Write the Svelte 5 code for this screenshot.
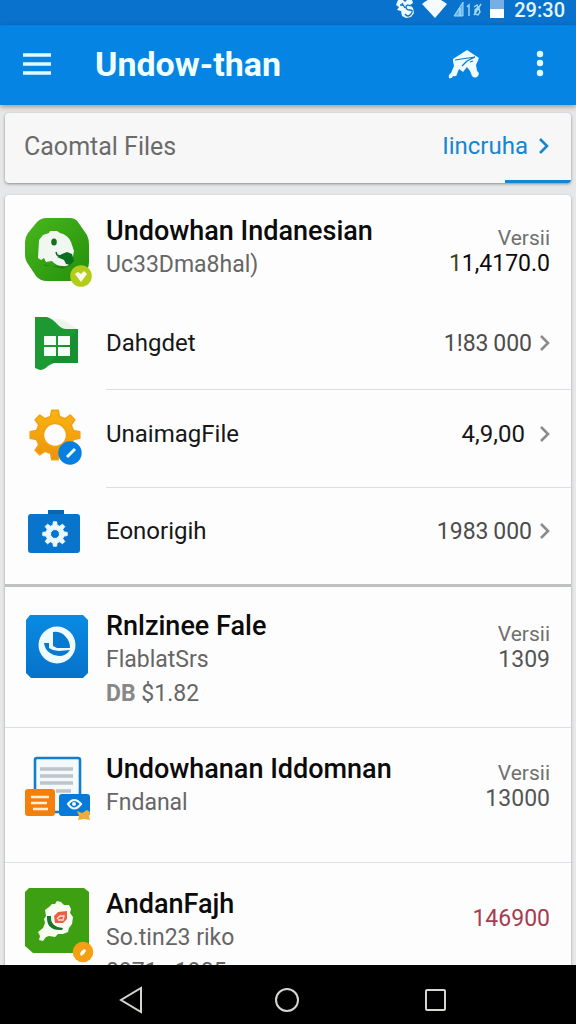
<script>
  function gear(cx, cy, teeth, inner, outer, hole) {
    const step = (Math.PI * 2) / teeth;
    const at = (r, a) => `${(cx + r * Math.sin(a)).toFixed(1)} ${(cy - r * Math.cos(a)).toFixed(1)}`;
    const points = [];
    for (let i = 0; i < teeth; i++) {
      const a = i * step;
      points.push(at(inner, a - step * 0.3), at(outer, a - step * 0.17), at(outer, a + step * 0.17), at(inner, a + step * 0.3));
    }
    return `M${points.join('L')}ZM${cx - hole} ${cy}a${hole} ${hole} 0 1 0 ${hole * 2} 0a${hole} ${hole} 0 1 0 ${-hole * 2} 0Z`;
  }

  const settings = [
    { icon: 'sheet', name: 'Dahgdet', value: '1!83\u2009000', tone: 'soft' },
    { icon: 'gear', name: 'UnaimagFile', value: '4,9,00', tone: 'dark' },
    { icon: 'case', name: 'Eonorigih', value: '1983\u2009000', tone: 'soft' }
  ];
</script>

{#snippet chevron()}
  <svg class="chevron" viewBox="0 0 12 18" aria-hidden="true"><path d="M2 2l7 7-7 7" fill="none" stroke="currentColor" stroke-width="2.6" /></svg>
{/snippet}

<div class="screen">
  <div class="status">
    <svg width="20" height="20" viewBox="0 0 20 20" aria-hidden="true">
      <path d="M2 0h5l2 2 2-2h5l1 3-3 2 3 3 1 5-3 4-5 1-4-2-1-5-4-1 2-3-3-2z" fill="#eefaff" />
      <path d="M15 6q-5-2-5 1t4 3 1 4-6 0M6 3l3 5M4 5l3 0" fill="none" stroke="#0872cd" stroke-width="1.3" />
    </svg>
    <svg width="25" height="18" viewBox="0 0 25 18" aria-hidden="true"><path d="M0 4Q12-7 25 4L13 18Z" fill="#f4fcff" /></svg>
    <svg width="31" height="18" viewBox="0 0 31 18" aria-hidden="true">
      <path d="M1 16L10 2v14z" fill="#62b6ee" stroke="#a5dafa" />
      <path d="M7 16V8M14 7l2-2v11M21 7l3-2 1 2-3 3v4l3 1 2-3-1-3-3 1M21 15l7-11" fill="none" stroke="#a5dafa" stroke-width="1.4" />
    </svg>
    <svg width="14" height="18" viewBox="0 0 14 18" aria-hidden="true"><path d="M0 0h14v9H0z" fill="#75afe4" /><path d="M0 9h14v9H0z" fill="#fff" /></svg>
    <time>29:30</time>
  </div>

  <header>
    <button class="menu" aria-label="Menu">
      <svg width="30" height="24" viewBox="0 0 30 24"><path d="M1 3h28M1 12h28M1 21h28" stroke="#dffbff" stroke-width="3.4" /></svg>
    </button>
    <h1>Undow-than</h1>
    <button aria-label="Home">
      <svg width="30" height="28" viewBox="0 0 30 28">
        <path d="M3 9L17 0l12 8-3 7 1 6q3 2 1 5-3 3-6 0l-2-5-3-4-4 5-4-3-2 5q0 3-4 2-1 3-4 2-1-3 2-5l3-7-1-5z" fill="#effcff" />
        <path d="M5 10l20-3-8 4-5 5M20 12l3-1" fill="none" stroke="#0b78c9" stroke-width="1.2" />
      </svg>
    </button>
    <button class="more" aria-label="More options">
      <svg width="8" height="28" viewBox="0 0 8 28" fill="#dffbff"><circle cx="4" cy="4" r="3.2" /><circle cx="4" cy="13" r="3.2" /><circle cx="4" cy="23" r="3.2" /></svg>
    </button>
  </header>

  <main>
    <nav class="tabs">
      <span>Caomtal Files</span>
      <a href="#more">Iincruha {@render chevron()}</a>
    </nav>

    <div class="card">
      <section class="item first">
        <svg class="art" viewBox="0 0 66 70" aria-hidden="true">
          <defs><linearGradient id="leaf" x1="0" y1="0" x2="1" y2="1"><stop offset="0" stop-color="#48b71d" /><stop offset="1" stop-color="#238f0b" /></linearGradient></defs>
          <path d="M21 0h24q5 0 8 4l9 13q2 4 2 10v17q0 9-7 14-6 5-13 5H22q-7 0-11-5L3 46Q0 42 0 36V24q0-5 3-9L12 4q4-4 9-4z" fill="url(#leaf)" />
          <path d="M18 46l3 2 17 0 8-1-8 4z" fill="#228310" />
          <path d="M14 22l4-5 6-2 1-2h7l3 2q8 2 11 9l3 9-2 10q-3 6-9 5-7 0-11-5l-6 1-2-4-3 2-3-2z" fill="#f0f7f0" />
          <ellipse cx="29" cy="24" rx="2.8" ry="3.6" fill="#16701c" />
          <path d="M37 36l5-2 5 2 2 7-4 4-4-1-2-4-7-3z" fill="#0b6d20" />
          <path d="M31 34l1 3 6 2" fill="none" stroke="#0b6d20" stroke-width="1.5" />
          <circle cx="56" cy="58" r="10.8" fill="#b3cc1c" />
          <path d="M50 56l3-2 3 2 3-3 3 3-6 8z" fill="#fafee5" />
        </svg>
        <div class="text"><h2>Undowhan Indanesian</h2><p>Uc33Dma8hal)</p></div>
        <div class="meta"><span>Versii</span><strong class="black"><i>1</i>1,4170.0</strong></div>
      </section>

      {#each settings as row}
        <a class="setting" href={'#' + row.icon}>
          <svg class="pic" viewBox="0 0 64 64" aria-hidden="true">
            {#if row.icon === 'sheet'}
              <path d="M25 7l12 0 16 10-17 1z" fill="#edf3ed" />
              <path d="M10 5h12q6 2 11 8 4 4 8 4h12v34H29q-3 0-6 3-4 4-8 4l-5-2z" fill="#1c9932" />
              <path d="M53 17v34H29l-6 3 17-22z" fill="#168b2d" opacity=".6" />
              <path d="M19 24h12v9H19zM33 24h12v9H33zM19 35h12v9H19zM33 35h12v9H33z" fill="#f5fff5" />
            {:else if row.icon === 'gear'}
              <defs><linearGradient id="amber" x1="0" y1="0" x2="0" y2="1"><stop offset="0" stop-color="#f9b410" /><stop offset="1" stop-color="#ed920d" /></linearGradient></defs>
              <path d={gear(30, 33, 8, 19, 25, 11.5)} fill="url(#amber)" fill-rule="evenodd" stroke="#f2a111" stroke-width="1.5" stroke-linejoin="round" />
              <circle cx="45" cy="51" r="11.7" fill="#087ee0" />
              <path d="M42 55l8-8" stroke="#eff" stroke-width="3" />
            {:else}
              <path d="M23 16v-5h16v5" fill="#0867b0" />
              <rect x="3" y="15" width="52" height="39" rx="3" fill="#0874cb" />
              <path d={gear(30, 35, 8, 9, 12.3, 4.5)} fill="#ebf9ff" fill-rule="evenodd" stroke="#ebf9ff" stroke-linejoin="round" />
            {/if}
          </svg>
          <span class="line">
            <span class="name">{row.name}</span>
            <span class={'value ' + row.tone}>{row.value}</span>
            {@render chevron()}
          </span>
        </a>
      {/each}

      <section class="item group">
        <svg class="art" viewBox="0 0 66 70" aria-hidden="true">
          <defs><linearGradient id="sky" x1="0" y1="0" x2="0" y2="1"><stop offset="0" stop-color="#098be3" /><stop offset="1" stop-color="#0672ca" /></linearGradient></defs>
          <path d="M5 0h53l5 5v53l-5 5H6l-5-5V5z" fill="url(#sky)" />
          <circle cx="32" cy="30" r="18.5" fill="#eefaff" />
          <path d="M28 17q7-1 12 4 5 5 5 12l-13 0-4-2z" fill="#0879d1" />
          <path d="M19 28h5v5l4 2 6 1 11-1q-4 6-11 6-5 0-9-3-5-3-6-10z" fill="#0879d1" />
        </svg>
        <div class="text"><h2>Rnlzinee Fale</h2><p>FlablatSrs</p><p><b>DB</b> $1.82</p></div>
        <div class="meta"><span>Versii</span><strong>1309</strong></div>
      </section>

      <section class="item doc">
        <svg class="art" viewBox="0 0 66 70" aria-hidden="true">
          <rect x="10" y="2" width="45" height="54" rx="2" fill="#f4f9fc" stroke="#147fc8" stroke-width="2.6" />
          <path d="M15 13h33M15 20h33M15 27h33M31 35h15" stroke="#bdc4c9" stroke-width="3.6" />
          <rect x="0" y="33" width="30" height="27" rx="3" fill="#f57f0b" />
          <path d="M6 41h18M6 47h16M8 53h15" stroke="#fff0d5" stroke-width="2.3" />
          <rect x="34" y="38" width="31" height="22" rx="3" fill="#0779d9" />
          <path d="M43 48q6-8 13 0-7 9-13 0z" fill="none" stroke="#edfaff" stroke-width="2.2" /><circle cx="49" cy="48" r="2" fill="#edfaff" />
          <path d="M52 55l5 2 5-3 3 2-1 4 1 4-6-1-6 1 1-4z" fill="#edae37" />
        </svg>
        <div class="text"><h2>Undowhanan Iddomnan</h2><p>Fndanal</p></div>
        <div class="meta"><span>Versii</span><strong>13000</strong></div>
      </section>

      <section class="item last">
        <svg class="art" viewBox="0 0 70 74" aria-hidden="true">
          <path d="M4 0h55l5 4v58l-4 3H8l-8-7V4z" fill="#3d9f12" />
          <path d="M20 22l4-3 3-3 3 0 2-3 4 1 3 3 5 0 2 4-1 4 3 4-1 7-3 4-1 4-5 2-5 0-3 3-6-1-3 1-3 4-4-1 1-4-2-4 5-4 2-5-1-4 2-3z" fill="#f7fbf0" />
          <path d="M22 28h4q-1 11 12 12l-1 2q-16 1-15-14z" fill="#14782a" />
          <path d="M29 28l4-4 9-1 0 8-4 4-8 0z" fill="#ec6045" /><path d="M32 31l3-3 4 0-1 4-5 0" fill="none" stroke="#ffe0d4" stroke-width="1.4" />
          <circle cx="58" cy="64" r="10.3" fill="#f5a014" /><path d="M55 66q1-4 5-5l1 2q-2 4-5 5z" fill="#fff" />
        </svg>
        <div class="text"><h2>AndanFajh</h2><p>So.tin23 riko</p><p>0971 &nbsp; 1905</p></div>
        <div class="meta"><strong class="red">146900</strong></div>
      </section>
    </div>
  </main>

  <footer>
    <button aria-label="Back"><svg width="28" height="28" viewBox="0 0 28 28"><path d="M20 2v24L0 14z" /></svg></button>
    <button aria-label="Home screen"><svg width="28" height="28" viewBox="0 0 28 28"><circle cx="14" cy="14" r="11" /></svg></button>
    <button aria-label="Recent apps"><svg width="28" height="28" viewBox="0 0 28 28"><rect x="1" y="4" width="19" height="20" rx="1" /></svg></button>
  </footer>
</div>

<style>
  :global(body) { margin: 0; }
  .screen { height: 100vh; display: flex; flex-direction: column; overflow: hidden; background: #e5e7e9; color: #171717; font-family: Roboto, "Liberation Sans", sans-serif; font-size: 24px; }
  button { background: none; border: 0; padding: 0; display: flex; align-items: center; justify-content: center; }
  h1, h2, p { margin: 0; }
  svg { display: block; flex: none; overflow: visible; }
  a { color: inherit; text-decoration: none; }

  .status { flex: none; height: 25px; background: #0872cd; display: flex; justify-content: flex-end; gap: 6px; padding-right: 11px; color: #e3f6ff; overflow: hidden; }
  .status time { margin-left: 4px; font-size: 20px; line-height: 20px; font-weight: 500; }

  header { flex: none; height: 80px; background: #0684e4; display: flex; align-items: center; padding: 0 20px 2px 22px; position: relative; box-shadow: 0 2px 5px #0005; box-sizing: border-box; }
  h1 { flex: 1; padding-left: 43px; color: #f0ffff; font-size: 34px; line-height: 40px; font-weight: 700; }
  .more { width: 32px; margin-left: 44px; }

  main { flex: 1; min-height: 0; overflow: hidden; padding: 8px 5px 0; display: flex; flex-direction: column; gap: 12px; }
  .tabs { flex: none; height: 70px; box-sizing: border-box; display: flex; align-items: center; justify-content: space-between; padding: 0 21px 4px 19px; background: linear-gradient(#1784d4, #1784d4) right bottom / 66px 3px no-repeat #f7f7f7; border-radius: 4px; box-shadow: 0 1px 3px #0006; color: #6b6b6b; font-size: 25px; }
  .tabs a { display: flex; align-items: center; gap: 10px; color: #1686d2; font-size: 24px; }
  .card { flex: none; background: #fdfdfd; border-radius: 4px; box-shadow: 0 1px 3px #0005; }
  .chevron { width: 12px; height: 18px; }

  .item { display: flex; align-items: flex-start; box-sizing: border-box; padding: 24px 21px 0 20px; border-bottom: 1px solid #dcdedf; }
  .art { width: 66px; height: 70px; margin-top: 4px; }
  .text { flex: 1; padding-left: 15px; min-width: 0; white-space: nowrap; }
  h2 { font-size: 27px; line-height: 34px; font-weight: 500; color: #0b0b0b; }
  p { font-size: 23px; line-height: 34px; color: #666; }
  p b { font-weight: 700; color: #888; }
  .meta { display: flex; flex-direction: column; align-items: flex-end; margin-top: 12px; font-size: 21px; line-height: 26px; color: #707070; }
  .meta strong { font-size: 23px; font-weight: 400; color: #555; }
  .meta .black { color: #0b0b0b; }
  .meta i { font-style: normal; color: #3d4517; }
  .meta .red { color: #a83b50; }
  .first { height: 112px; padding-top: 19px; border: 0; }
  .first .meta { margin-top: 11px; }
  .group { height: 141px; padding-top: 22px; }
  .group .art { margin-top: 6px; }
  .doc { height: 135px; }
  .doc .meta { margin-top: 8px; }
  .last { height: 140px; border: 0; }
  .last .art { width: 70px; height: 74px; margin-top: 1px; }
  .last .text { padding-left: 11px; }
  .last .meta { margin-top: 19px; }

  .setting { display: flex; height: 98px; padding-left: 20px; }
  .setting:nth-child(2) { height: 83px; }
  .setting:nth-child(4) { border-bottom: 3px solid #bec0c1; height: 96px; }
  .pic { width: 64px; height: 64px; align-self: center; margin-bottom: 10px; }
  .line { flex: 1; margin-left: 17px; display: flex; align-items: center; padding: 0 20px 10px 0; border-bottom: 1px solid #dcdedf; }
  .setting:nth-child(4) .line { border: 0; }
  .name { flex: 1; }
  .value { margin-right: 7px; font-size: 23px; }
  .dark { margin-right: 14px; font-size: 24px; }
  .soft { color: #4c4c4c; }
  .line .chevron { color: #8b8b8b; }

  footer { flex: none; height: 59px; background: #000; display: flex; align-items: center; justify-content: center; gap: 124px; padding: 11px 2px 0 0; box-sizing: border-box; }
  footer svg { fill: none; stroke: #d6d6d0; stroke-width: 2; }
</style>
